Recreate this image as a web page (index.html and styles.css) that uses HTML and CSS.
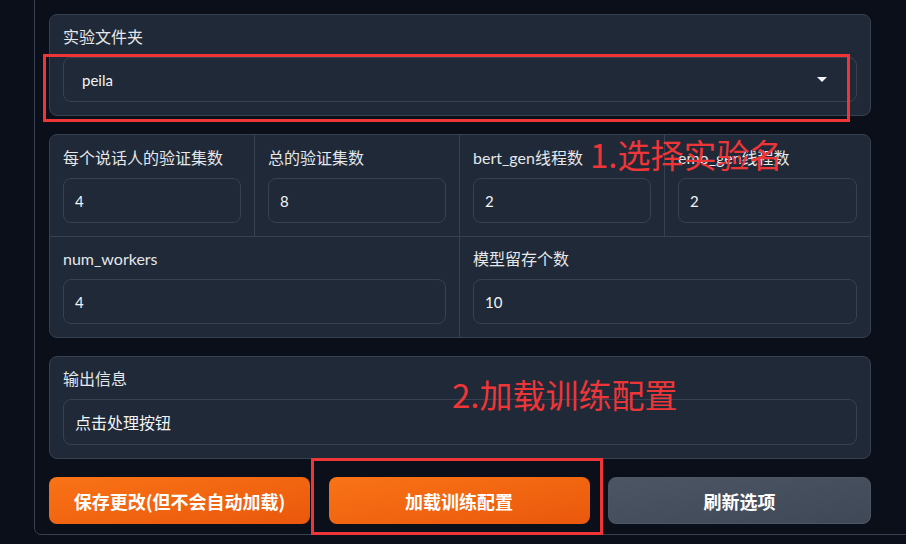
FILE: index.html
```html
<!DOCTYPE html>
<html lang="zh-CN">
<head>
<meta charset="utf-8">
<title>训练配置</title>
<link rel="stylesheet" href="styles.css">
</head>
<body>
<div class="panel">
  <div class="card card-single">
    <div class="label">实验文件夹</div>
    <div class="field dropdown">
      <span class="value">peila</span>
      <svg class="caret" width="10" height="5" viewBox="0 0 10 5"><path d="M0 0 H10 L5 5 Z" fill="#f3f4f6"/></svg>
    </div>
  </div>

  <div class="card grid">
    <div class="cell">
      <div class="label">每个说话人的验证集数</div>
      <div class="field">4</div>
    </div>
    <div class="cell">
      <div class="label">总的验证集数</div>
      <div class="field">8</div>
    </div>
    <div class="cell">
      <div class="label">bert_gen线程数</div>
      <div class="field">2</div>
    </div>
    <div class="cell last">
      <div class="label">emo_gen线程数</div>
      <div class="field">2</div>
    </div>
    <div class="cell wide bottom">
      <div class="label">num_workers</div>
      <div class="field">4</div>
    </div>
    <div class="cell wide bottom last">
      <div class="label">模型留存个数</div>
      <div class="field">10</div>
    </div>
  </div>

  <div class="card card-single">
    <div class="label">输出信息</div>
    <div class="field textbox">点击处理按钮</div>
  </div>

  <div class="buttons">
    <button class="btn primary">保存更改(但不会自动加载)</button>
    <button class="btn primary">加载训练配置</button>
    <button class="btn secondary">刷新选项</button>
  </div>
</div>

<div class="mark mark-1"></div>
<div class="mark mark-2"></div>
<div class="note note-1">1.选择实验名</div>
<div class="note note-2">2.加载训练配置</div>
</body>
</html>
```

FILE: styles.css
```css
* { box-sizing: border-box; }

html, body {
  margin: 0;
  padding: 0;
  width: 906px;
  height: 544px;
  overflow: hidden;
  background: #0b0f19;
  font-family: "Lato", "Noto Sans CJK SC", sans-serif;
  color: #e5e7eb;
}

body { position: relative; }

.panel {
  margin-left: 34px;
  margin-top: -20px;
  width: 900px;
  height: 555px;
  border: 1px solid #374151;
  border-radius: 0 0 0 7px;
  padding: 33px 0 0 14px;
  display: flex;
  flex-direction: column;
  gap: 18px;
}

.card {
  width: 822px;
  background: #1f2937;
  border: 1px solid #374151;
  border-radius: 8px;
}

.card-single {
  padding: 12px 13px 13px 13px;
  display: flex;
  flex-direction: column;
  gap: 10px;
}

.card-single.out { padding-bottom: 12px; }

.label {
  font-size: 16px;
  line-height: 20px;
  height: 20px;
  color: #e5e7eb;
  white-space: nowrap;
}

.field {
  height: 45px;
  border: 1px solid #374151;
  border-radius: 8px;
  background: #1f2937;
  display: flex;
  align-items: center;
  padding-left: 11px;
  font-size: 15px;
  color: #f3f4f6;
}

.dropdown {
  padding-left: 18px;
  padding-right: 29px;
  justify-content: space-between;
}

.textbox {
  height: 46px;
  font-size: 16px;
}

.grid {
  display: grid;
  grid-template-columns: repeat(4, 1fr);
  overflow: hidden;
}

.cell {
  padding: 13px 13px 13px 13px;
  display: flex;
  flex-direction: column;
  gap: 10px;
  border-right: 1px solid #374151;
  border-bottom: 1px solid #374151;
}

.cell.last { border-right: none; }
.cell.bottom { border-bottom: none; padding-top: 12px; }
.cell.wide { grid-column: span 2; }

.buttons {
  display: flex;
  gap: 18.5px;
  width: 822px;
}

.btn {
  flex: 1;
  height: 47px;
  border: none;
  border-radius: 8px;
  font-family: "Noto Sans CJK SC", sans-serif;
  font-weight: 700;
  font-size: 18px;
  color: #ffffff;
  padding: 0;
}

.primary {
  background: linear-gradient(to bottom right, #f97316, #ea580c);
}

.secondary {
  background: linear-gradient(to bottom right, #4b5563, #3f4856);
  border: 1px solid #4b5563;
}

.mark {
  position: absolute;
  border: 3px solid #ee3538;
}

.mark-1 {
  left: 43px;
  top: 54px;
  width: 807px;
  height: 68px;
}

.mark-2 {
  left: 311px;
  top: 458px;
  width: 292px;
  height: 77px;
}

.note {
  position: absolute;
  font-family: "Noto Sans CJK SC", sans-serif;
  font-size: 33px;
  line-height: 40px;
  color: #ee3538;
  white-space: nowrap;
}

.note-1 { left: 590px; top: 134px; }
.note-2 { left: 452px; top: 374px; }
```
